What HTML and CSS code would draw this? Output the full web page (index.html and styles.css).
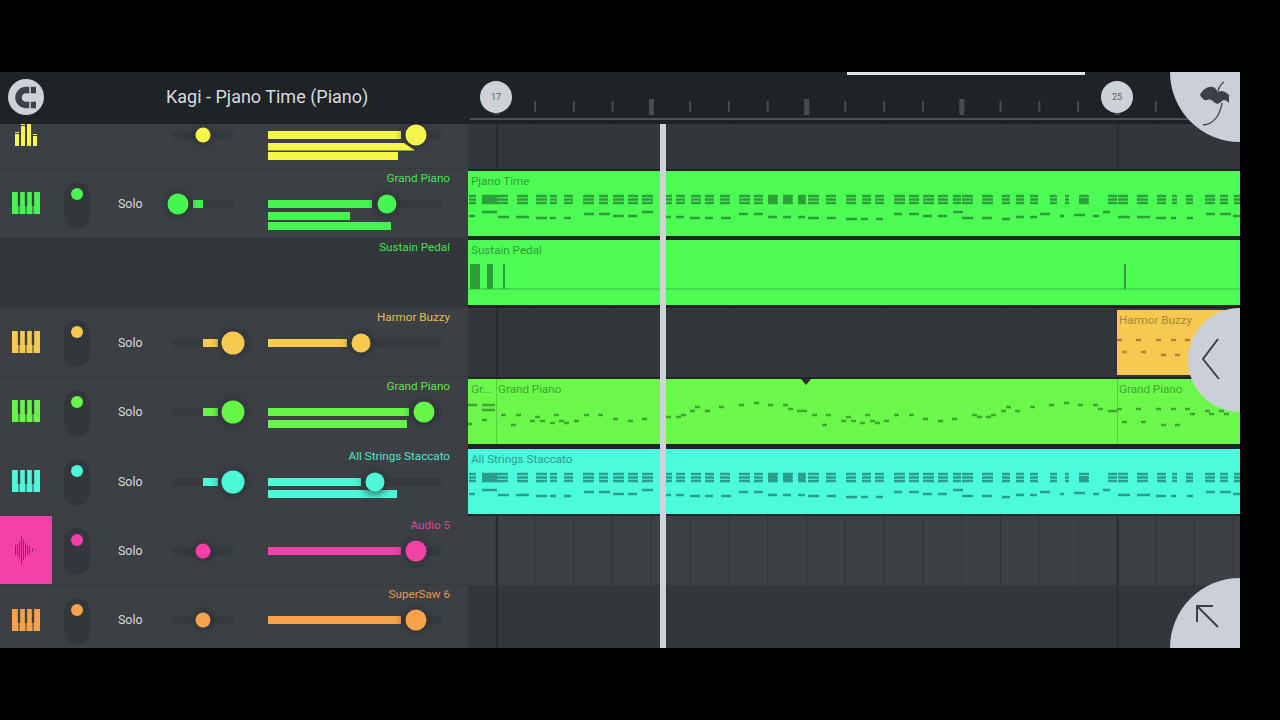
FILE: index.html
```html
<!DOCTYPE html>
<html lang="en">
<head>
    <meta charset="UTF-8">
    <title>Kagi - Pjano Time (Piano)</title>
    <link rel="stylesheet" href="styles.css">
</head>
<body>

<svg class="sprite" xmlns="http://www.w3.org/2000/svg">
    <symbol id="keys" viewBox="0 0 28 22">
        <path fill="currentColor" fill-rule="evenodd" d="M0 0H28V22H0Z M5.800 0h2.400v14h-.7v8h-1v-8h-.7z M12.800 0h2.400v14h-.7v8h-1v-8h-.7z M19.800 0h2.400v14h-.7v8h-1v-8h-.7z"/>
    </symbol>
    <g id="note-row">
        <path d="M469 0h7M482 0h15M497 0h11M517 0h11M536 0h11M550 0h7M564 0h9M583 0h11M599 0h9M613 0h11M628 0h10M642 0h11M665 0h7M676 0h9M691 0h10M705 0h9M720 0h10M739 0h11M754 0h9M768 0h10M783 0h10M798 0h8M808 0h11M826 0h10M846 0h10M862 0h9M875 0h9M894 0h11M909 0h10M923 0h11M938 0h10M953 0h8M962 0h11M982 0h11M1002 0h8M1016 0h8M1030 0h8M1050 0h7M1065 0h4M1079 0h10M1108 0h9M1118 0h10M1137 0h11M1157 0h9M1172 0h5M1186 0h7M1205 0h10M1220 0h8M1234 0h6"/>
    </g>
    <g id="piano-notes">
        <use href="#note-row" y="25"/>
        <use href="#note-row" y="28.500"/>
        <use href="#note-row" y="32"/>
        <path class="note-thick" d="M482 28h15M768 28h9M783 28h9M798 28h7M1079 30h9"/>
        <path d="M469 45h6M482 41h15M498 46h11M516 46h13M536 47h11M550 47h6M564 47h7M584 43h10M599 43h11M613 45h11M628 45h9M642 41h11M666 46h5M676 46h8M690 47h10M705 47h8M721 47h10M739 43h9M754 43h9M768 46h9M783 46h8M798 46h7M808 47h11M827 47h9M846 48h11M861 48h7M876 48h7M894 43h8M909 43h10M923 45h9M938 45h9M953 41h10M962 47h11M982 47h10M1002 48h8M1016 46h8M1030 46h7M1040 43h10M1060 45h4M1074 44h11M1093 45h6M1103 41h7M1118 46h12M1137 46h13M1156 47h10M1171 47h5M1187 47h6M1206 43h9M1220 43h11M1233 45h7"/>
    </g>
</svg>

<div class="app">
    <div class="top">
        <div class="title-bar">
            <div class="magnet">
                <svg width="36" height="36" viewBox="0 0 36 36">
                    <path d="M28 11H18a7.500 7.500 0 0 0 0 15h10" fill="none" stroke="#3d4147" stroke-width="6.500"/>
                    <path d="M22 7v8M22 22v8" stroke="#cdd1d8" stroke-width="1.500"/>
                </svg>
            </div>
            <h1 class="title">Kagi - Pjano Time (Piano)</h1>
        </div>
        <div class="ruler">
            <div class="scroll-thumb"></div>
            <span class="bar-pin pin-17">17</span>
            <span class="bar-pin pin-25">25</span>
            <div class="ticks"></div>
            <div class="ruler-line"></div>
        </div>
    </div>

    <div class="body">
        <div class="tracks">
            <div class="row yellow">
                <div class="icon">
                    <svg width="22" height="24" viewBox="0 0 22 24">
                        <path fill="currentColor" d="M0 12h4v12H0zM0 10h4v1H0zM6 4h4v20H6zM6 2h4v1H6zM12 2h4v22h-4zM12 0h4v1h-4zM18 14h4v10h-4zM18 12h4v1h-4z"/>
                    </svg>
                </div>
                <div class="toggle-slot"></div>
                <div class="solo"></div>
                <div class="pan"><span class="knob knob-sm" style="left:31px"></span></div>
                <div class="strip">
                    <div class="name">&nbsp;</div>
                    <div class="vol">
                        <div class="vol-main"><div class="fill" style="width:133px"></div><span class="knob" style="left:148px"></span></div>
                        <div class="bar bar-tip" style="width:147px"></div>
                        <div class="bar" style="width:130px"></div>
                    </div>
                </div>
            </div>

            <div class="row green">
                <div class="icon"><svg width="28" height="22"><use href="#keys"/></svg></div>
                <div class="toggle-slot"><div class="toggle"><span class="dot"></span></div></div>
                <div class="solo">Solo</div>
                <div class="pan"><div class="fill" style="margin-left:21px;width:10px"></div><span class="knob" style="left:6px"></span></div>
                <div class="strip">
                    <div class="name">Grand Piano</div>
                    <div class="vol">
                        <div class="vol-main"><div class="fill" style="width:104px"></div><span class="knob knob-md" style="left:119px"></span></div>
                        <div class="bar" style="width:82px"></div>
                        <div class="bar" style="width:123px"></div>
                    </div>
                </div>
            </div>

            <div class="row row-empty green">
                <div class="strip strip-wide">
                    <div class="name">Sustain Pedal</div>
                </div>
            </div>

            <div class="row amber">
                <div class="icon"><svg width="28" height="22"><use href="#keys"/></svg></div>
                <div class="toggle-slot"><div class="toggle"><span class="dot"></span></div></div>
                <div class="solo">Solo</div>
                <div class="pan"><div class="fill" style="margin-left:31px;width:15px"></div><span class="knob knob-lg" style="left:61px"></span></div>
                <div class="strip">
                    <div class="name">Harmor Buzzy</div>
                    <div class="vol">
                        <div class="vol-main"><div class="fill" style="width:79px"></div><span class="knob knob-md" style="left:93px"></span></div>
                    </div>
                </div>
            </div>

            <div class="row lime">
                <div class="icon"><svg width="28" height="22"><use href="#keys"/></svg></div>
                <div class="toggle-slot"><div class="toggle"><span class="dot"></span></div></div>
                <div class="solo">Solo</div>
                <div class="pan"><div class="fill" style="margin-left:31px;width:15px"></div><span class="knob knob-lg" style="left:61px"></span></div>
                <div class="strip">
                    <div class="name">Grand Piano</div>
                    <div class="vol">
                        <div class="vol-main"><div class="fill" style="width:141px"></div><span class="knob" style="left:156px"></span></div>
                        <div class="bar" style="width:139px"></div>
                    </div>
                </div>
            </div>

            <div class="row cyan">
                <div class="icon"><svg width="28" height="22"><use href="#keys"/></svg></div>
                <div class="toggle-slot"><div class="toggle"><span class="dot"></span></div></div>
                <div class="solo">Solo</div>
                <div class="pan"><div class="fill" style="margin-left:31px;width:15px"></div><span class="knob knob-lg" style="left:61px"></span></div>
                <div class="strip">
                    <div class="name">All Strings Staccato</div>
                    <div class="vol">
                        <div class="vol-main"><div class="fill" style="width:93px"></div><span class="knob knob-md" style="left:107px"></span></div>
                        <div class="bar" style="width:129px"></div>
                    </div>
                </div>
            </div>

            <div class="row pink">
                <div class="icon icon-audio">
                    <svg width="22" height="30" viewBox="0 0 22 30">
                        <path stroke="#8c2a70" stroke-width="1" d="M.5 10v10M2.500 9v12M4.500 6.500v17M6.500 .5v29M8.500 5v20M10.500 7.500v15M12.500 10v10M14.500 11v8M17.500 13v4M20.500 14.500v1"/>
                    </svg>
                </div>
                <div class="toggle-slot"><div class="toggle"><span class="dot"></span></div></div>
                <div class="solo">Solo</div>
                <div class="pan"><span class="knob knob-sm" style="left:31px"></span></div>
                <div class="strip">
                    <div class="name">Audio 5</div>
                    <div class="vol">
                        <div class="vol-main"><div class="fill" style="width:133px"></div><span class="knob" style="left:148px"></span></div>
                    </div>
                </div>
            </div>

            <div class="row orange">
                <div class="icon"><svg width="28" height="22"><use href="#keys"/></svg></div>
                <div class="toggle-slot"><div class="toggle"><span class="dot"></span></div></div>
                <div class="solo">Solo</div>
                <div class="pan"><span class="knob knob-sm" style="left:31px"></span></div>
                <div class="strip">
                    <div class="name">SuperSaw 6</div>
                    <div class="vol">
                        <div class="vol-main"><div class="fill" style="width:133px"></div><span class="knob" style="left:148px"></span></div>
                    </div>
                </div>
            </div>
        </div>

        <div class="lanes">
            <div class="lane lane-grid"></div>

            <div class="lane lane-clips">
                <div class="clips clip-green">
                    <div class="clip">Pjano Time</div>
                    <svg class="notes" viewBox="468 0 772 65"><use href="#piano-notes"/></svg>
                </div>
            </div>

            <div class="lane lane-clips">
                <div class="clips clip-green">
                    <div class="clip">Sustain Pedal</div>
                    <svg class="notes" viewBox="468 0 772 65">
                        <path class="pedal-line" d="M468 49h772"/>
                        <path class="pedal" d="M470 24h10v25h-10zM487 24h6v25h-6zM503 24h2v25h-2zM1124 24h2v25h-2z"/>
                    </svg>
                </div>
            </div>

            <div class="lane lane-grid">
                <div class="clips clip-amber clips-late">
                    <div class="clip clip-late">Harmor Buzzy</div>
                    <svg class="notes notes-late" viewBox="1117 0 123 65">
                        <path d="M1117 30h5M1136 30h5M1156 30h5M1171 30h5M1185 30h5M1122 42h5M1141 42h5M1161 45h5M1175 45h5"/>
                    </svg>
                </div>
            </div>

            <div class="lane lane-clips">
                <div class="clips clip-lime">
                    <div class="clip clip-first">Gr...</div>
                    <div class="clip clip-main">Grand Piano</div>
                    <div class="clip clip-rest">Grand Piano</div>
                    <svg class="notes" viewBox="468 0 772 65">
                        <path d="M468 26h9M482 26h13M482 31h13M468 45h4M482 41h5M501 36h5M511 46h5M516 36h5M530 42h5M535 38h5M540 42h5M550 44h5M554 36h5M559 42h5M564 44h5M574 42h5M584 36h5M598 36h5M613 40h5M628 42h5M642 40h5M666 38h5M676 38h5M681 36h5M690 32h5M695 28h5M705 32h5M719 28h5M739 26h5M754 24h5M768 26h5M783 26h5M788 30h5M797 32h10M812 36h5M822 46h5M826 36h5M841 42h5M846 38h5M851 42h5M860 44h5M865 36h5M870 42h5M875 44h5M884 42h5M894 36h5M909 36h5M923 40h5M938 42h5M952 40h5M972 36h5M977 38h5M986 38h5M991 36h5M1001 32h5M1006 28h5M1015 32h5M1030 28h5M1049 26h5M1064 24h5M1078 26h5M1093 26h5M1098 30h5M1108 32h9M1117 30h5M1136 30h5M1156 30h5M1171 30h5M1185 30h5M1190 35h5M1205 32h5M1209 35h5M1219 32h5M1224 35h5M1122 43h5M1141 43h5M1161 46h5M1175 46h5"/>
                    </svg>
                    <span class="marker"></span>
                </div>
            </div>

            <div class="lane lane-clips">
                <div class="clips clip-cyan">
                    <div class="clip">All Strings Staccato</div>
                    <svg class="notes" viewBox="468 0 772 65"><use href="#piano-notes"/></svg>
                </div>
            </div>

            <div class="lane lane-grid lane-light"></div>
            <div class="lane lane-grid"></div>
        </div>
    </div>

    <div class="playhead"></div>

    <div class="corner corner-logo">
        <svg width="70" height="70" viewBox="0 0 70 70">
            <path fill="#3d4147" d="M30 23C33 17 38 14 43 15C46 16 47 19 48 20C51 18 55 19 59 23L59 31C56 28 54 27 52 29C49 32 47 33 44 30C41 27 39 27 37 28C35 29 32 27 30 23Z"/>
            <path fill="none" stroke="#3d4147" stroke-width="1.300" d="M54 10C51 12 49 15 48 19M52 31C50 42 45 52 33 53"/>
        </svg>
    </div>
    <div class="corner corner-back">
        <svg width="52" height="104" viewBox="0 0 52 104">
            <path fill="none" stroke="#3d4147" stroke-width="2" d="M30 31L15 51L31 71"/>
        </svg>
    </div>
    <div class="corner corner-up">
        <svg width="70" height="70" viewBox="0 0 70 70">
            <path fill="none" stroke="#3d4147" stroke-width="2" d="M43 28H27V44M27 28L48 49"/>
        </svg>
    </div>
</div>

</body>
</html>
```
FILE: styles.css
```css
* {
    box-sizing: border-box;
}
body {
    margin: 0;
    background-color: #000;
    font-family: Roboto, "Liberation Sans", sans-serif;
}
.sprite {
    display: none;
}
.app {
    position: relative;
    width: 1240px;
    height: 576px;
    margin-top: 72px;
    overflow: hidden;
    background-color: #33363b;
}

/* header */
.top {
    position: relative;
    z-index: 2;
    display: flex;
    height: 52px;
    background-color: #1f2227;
}
.title-bar {
    display: flex;
    align-items: center;
    width: 468px;
    padding: 0 0 2px 8px;
}
.magnet {
    width: 36px;
    height: 36px;
    border-radius: 50%;
    background-color: #cdd1d8;
}
.title {
    margin: 0 0 2px 122px;
    font-size: 18px;
    font-weight: 400;
    color: #d9dbde;
}
.ruler {
    position: relative;
    flex: 1;
    display: flex;
    flex-direction: column;
    justify-content: flex-end;
    padding-bottom: 3px;
}
.scroll-thumb {
    position: absolute;
    top: 0;
    left: 379px;
    width: 238px;
    height: 3px;
    background-color: #dfe2e6;
}
.bar-pin {
    position: absolute;
    top: 9px;
    width: 32px;
    height: 32px;
    border-radius: 50%;
    background-color: #cdd1d8;
    color: #555960;
    font-size: 9px;
    line-height: 32px;
    text-align: center;
}
.pin-17 {
    left: 12px;
}
.pin-25 {
    left: 633px;
}
.ticks {
    height: 16px;
    background-image:
        linear-gradient(90deg, #484c52 5px, transparent 5px),
        linear-gradient(90deg, #484c52 2px, transparent 2px);
    background-size: 155.2px 16px, 38.8px 11px;
    background-position: 25.8px 0, 27.2px 2px;
    background-repeat: repeat-x;
}
.ruler-line {
    height: 2px;
    margin: 3px 50px 1px 2px;
    background-color: #4c5056;
}

/* mixer side */
.body {
    display: flex;
    height: 524px;
    overflow: hidden;
}
.tracks {
    width: 468px;
    flex: none;
    margin-top: -24.4px;
}
.row {
    display: flex;
    height: 69.4px;
    border-bottom: 1px solid #35383d;
    background-color: #3c4045;
}
.row-empty {
    background-color: #33373b;
}
.yellow { color: #f6f64a; }
.green { color: #47f552; }
.amber { color: #f6ca50; }
.lime { color: #66f548; }
.cyan { color: #4cf8d8; }
.pink { color: #f540a8; }
.orange { color: #f6a24a; }
.icon {
    display: flex;
    align-items: center;
    justify-content: center;
    width: 52px;
    flex: none;
}
.icon-audio {
    background-color: #f540a8;
}
.toggle-slot {
    width: 38px;
    flex: none;
    padding: 12.500px 0 0 12px;
}
.toggle {
    width: 26px;
    height: 47px;
    padding-top: 6px;
    border-radius: 13px;
    background-color: #33363b;
}
.dot {
    display: block;
    width: 12px;
    height: 12px;
    margin: 0 auto;
    border-radius: 50%;
    background-color: currentColor;
}
.solo {
    width: 82px;
    flex: none;
    padding: 27px 0 0 28px;
    font-size: 12.400px;
    line-height: 16px;
    color: #d8dadd;
}
.pan {
    position: relative;
    display: flex;
    width: 62px;
    height: 8px;
    flex: none;
    margin-top: 31px;
    border-radius: 4px;
    background-color: #36393e;
}
.fill {
    height: 8px;
    background-color: currentColor;
}
.knob {
    position: absolute;
    top: 4px;
    width: 21px;
    height: 21px;
    border-radius: 50%;
    background-color: currentColor;
    box-shadow: 0 0 6px 4px rgba(44, 47, 52, 0.55);
    transform: translate(-50%, -50%);
}
.knob-sm {
    width: 15px;
    height: 15px;
}
.knob-md {
    width: 19px;
    height: 19px;
}
.knob-lg {
    width: 23px;
    height: 23px;
}
.strip {
    width: 234px;
    flex: none;
    padding-top: 2px;
}
.strip-wide {
    width: 468px;
}
.name {
    height: 14px;
    padding-right: 18px;
    font-size: 11.650px;
    line-height: 14px;
    text-align: right;
    opacity: 0.9;
}
.vol {
    width: 174px;
    margin: 15px 0 0 34px;
}
.vol-main {
    position: relative;
    height: 8px;
    margin-bottom: 4px;
    border-radius: 4px;
    background-color: #36393e;
}
.bar {
    height: 8px;
    margin-bottom: 1.500px;
    background-color: currentColor;
}
.bar-tip {
    clip-path: polygon(0 0, 92% 0, 100% 100%, 0 100%);
}

/* arrangement side */
.lanes {
    flex: 1;
    margin-top: -24.4px;
}
.lane {
    height: 69.4px;
    padding-top: 2px;
    background-color: #33363b;
}
.lane-clips {
    background-color: #212327;
}
.lane-grid {
    background-image:
        linear-gradient(90deg, #2a2c30 2px, transparent 2px),
        linear-gradient(90deg, #2f3236 1px, transparent 1px);
    background-size: 620.8px 100%, 38.8px 100%;
    background-position: 28px 0, 27.6px 0;
}
.lane-light {
    background-color: #3d4145;
}
.clips {
    position: relative;
    display: flex;
    height: 65px;
}
.clips-late {
    width: 123px;
    margin-left: 649px;
}
.clip {
    flex: 1;
    padding: 3px 0 0 3px;
    font-size: 11.650px;
    line-height: 14px;
}
.clip-first {
    flex: none;
    width: 28px;
}
.clip-main {
    flex: none;
    width: 621px;
    padding-left: 1px;
    border-left: 1px solid rgba(0, 0, 0, 0.18);
}
.clip-rest {
    padding-left: 1px;
    border-left: 1px solid rgba(0, 0, 0, 0.18);
}
.clip-late {
    padding-left: 2px;
}
.clip-green {
    background-color: #4dfb55;
    color: #2e9e3b;
}
.clip-lime {
    background-color: #6cf84a;
    color: #3fa630;
}
.clip-amber {
    background-color: #f6ca50;
    color: #a8883a;
}
.clip-cyan {
    background-color: #4cfbdc;
    color: #2a9e8a;
}
.notes {
    position: absolute;
    top: 0;
    left: 0;
    width: 772px;
    height: 65px;
    fill: none;
    stroke: currentColor;
    stroke-width: 2.600;
}
.notes-late {
    width: 123px;
}
.note-thick {
    stroke-width: 6;
}
.pedal {
    fill: currentColor;
    stroke: none;
}
.pedal-line {
    stroke: #35c23f;
    stroke-width: 1;
}
.marker {
    position: absolute;
    top: 0;
    left: 333px;
    width: 0;
    height: 0;
    border-left: 5px solid transparent;
    border-right: 5px solid transparent;
    border-top: 6px solid #2b2e33;
}
.playhead {
    position: absolute;
    top: 52px;
    bottom: 0;
    left: 660px;
    width: 5.500px;
    background-color: #cfd3d9;
}
.corner {
    position: absolute;
    right: 0;
    z-index: 3;
    background-color: #cbcfd8;
}
.corner svg {
    display: block;
}
.corner-logo {
    top: 0;
    width: 70px;
    height: 70px;
    border-bottom-left-radius: 70px;
}
.corner-back {
    top: 236px;
    width: 52px;
    height: 104px;
    border-radius: 52px 0 0 52px;
}
.corner-up {
    bottom: 0;
    width: 70px;
    height: 70px;
    border-top-left-radius: 70px;
}
```
